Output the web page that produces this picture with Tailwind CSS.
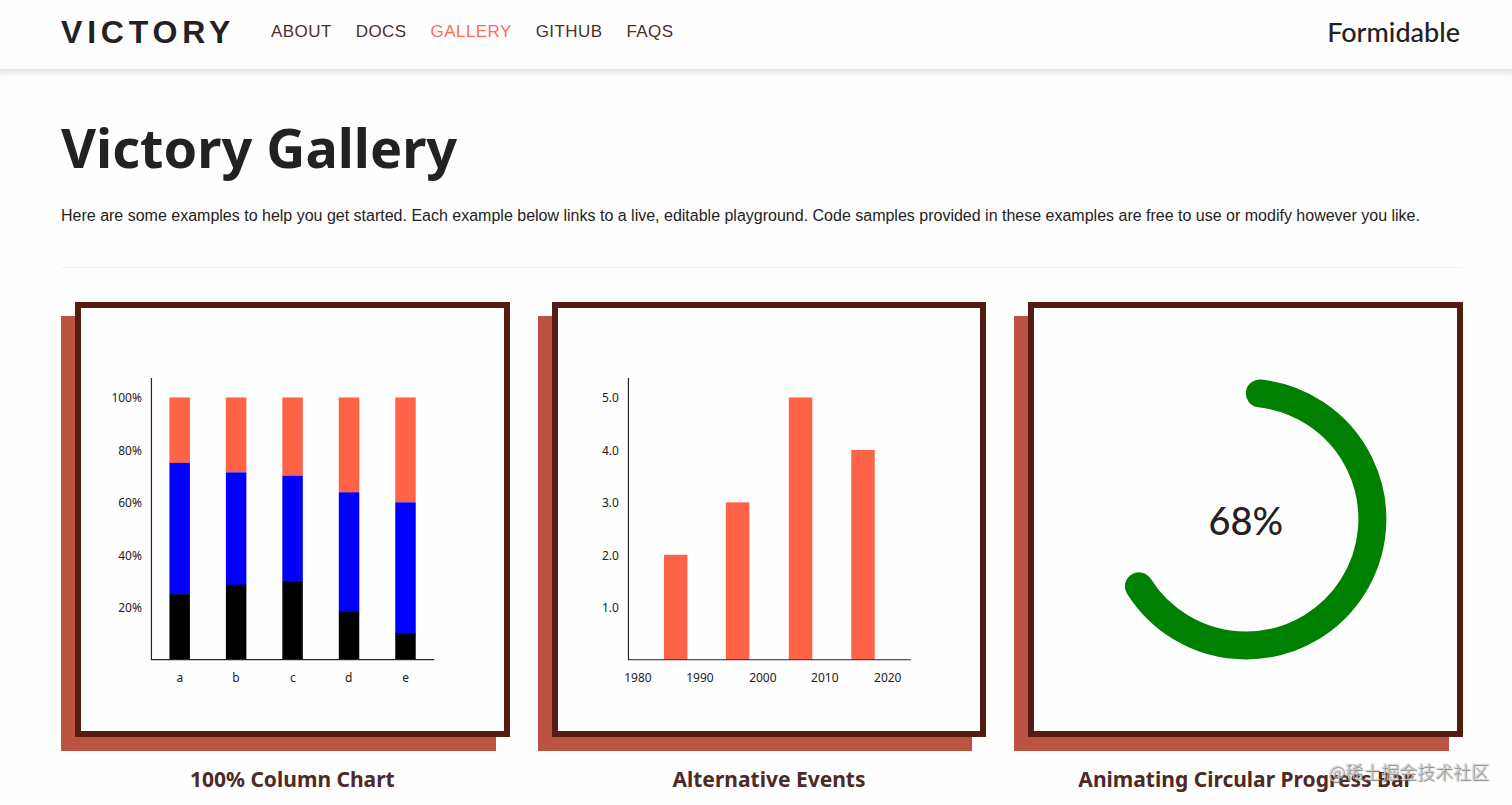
<!DOCTYPE html>
<html lang="en">
<head>
    <meta charset="UTF-8">
    <meta name="viewport" content="width=device-width, initial-scale=1.0">
    <title>Victory Gallery</title>
    <script src="https://cdn.jsdelivr.net/npm/@tailwindcss/browser@4"></script>
</head>
<body class="bg-[#fefefe] text-[#242121] font-['Liberation_Sans',Arial,sans-serif]">
    <div class="relative min-h-screen overflow-hidden">
        <header class="flex items-center justify-between h-[69px] pl-[61px] pr-[52px] pb-[6px] shadow-[0_2px_6px_2px_rgba(0,0,0,0.11)]">
            <div class="flex items-center gap-9">
                <a href="#" class="text-[32px] leading-10 font-bold tracking-[0.15em]">VICTORY</a>
                <nav class="flex gap-6 text-[17px] leading-6 tracking-wide text-[#4c2e2b]">
                    <a href="#">ABOUT</a>
                    <a href="#">DOCS</a>
                    <a href="#" class="text-[#ff6d55]">GALLERY</a>
                    <a href="#">GITHUB</a>
                    <a href="#">FAQS</a>
                </nav>
            </div>
            <a href="#" class="text-[27px] leading-8 font-medium font-[Lato,sans-serif]">Formidable</a>
        </header>

        <main class="pl-[61px] pr-[49px] pt-[38px]">
            <h1 class="text-[54px] leading-20 font-bold font-['Noto_Sans',sans-serif]">Victory Gallery</h1>
            <p class="mt-[13px] text-[16px] leading-8">Here are some examples to help you get started. Each example below links to a live, editable playground. Code samples provided in these examples are free to use or modify however you like.</p>
            <hr class="mt-[35px] border-[#f3f3f3]">

            <div class="mt-[34px] grid grid-cols-3 gap-7 text-[#4c2a26]">
                <!-- 100% column chart -->
                <a href="#" class="block">
                    <div class="pl-[14px] pb-[14px] bg-[linear-gradient(#bc5341,#bc5341)] bg-no-repeat bg-[position:0_14px] bg-[size:calc(100%-14px)_100%]">
                        <div class="aspect-square bg-[#fefefe] border-6 border-[#541c15]">
                            <svg viewBox="0 0 423 423" class="w-full h-full font-['Noto_Sans',sans-serif] text-[12px]" fill="#242121">
                                <g fill="tomato">
                                    <rect x="88.5" y="89.5" width="20.5" height="66"/>
                                    <rect x="145" y="89.5" width="20.5" height="75"/>
                                    <rect x="201.5" y="89.5" width="20.5" height="79"/>
                                    <rect x="258" y="89.5" width="20.5" height="95.5"/>
                                    <rect x="314.5" y="89.5" width="20.5" height="105"/>
                                </g>
                                <g fill="blue">
                                    <rect x="88.5" y="155" width="20.5" height="132"/>
                                    <rect x="145" y="164.5" width="20.5" height="113"/>
                                    <rect x="201.5" y="168" width="20.5" height="106"/>
                                    <rect x="258" y="184.5" width="20.5" height="120"/>
                                    <rect x="314.5" y="194.5" width="20.5" height="132"/>
                                </g>
                                <g fill="black">
                                    <rect x="88.5" y="286.5" width="20.5" height="65.5"/>
                                    <rect x="145" y="277" width="20.5" height="75"/>
                                    <rect x="201.5" y="273.5" width="20.5" height="78.5"/>
                                    <rect x="258" y="304" width="20.5" height="48"/>
                                    <rect x="314.5" y="325.5" width="20.5" height="26.5"/>
                                </g>
                                <path d="M70.5 70V352H353.5" fill="none" stroke="#252525" stroke-width="1.2"/>
                                <g text-anchor="end">
                                    <text x="61" y="94">100%</text>
                                    <text x="61" y="147">80%</text>
                                    <text x="61" y="199">60%</text>
                                    <text x="61" y="252">40%</text>
                                    <text x="61" y="304">20%</text>
                                </g>
                                <g text-anchor="middle">
                                    <text x="99" y="374">a</text>
                                    <text x="155" y="374">b</text>
                                    <text x="212" y="374">c</text>
                                    <text x="268" y="374">d</text>
                                    <text x="325" y="374">e</text>
                                </g>
                            </svg>
                        </div>
                    </div>
                    <h2 class="mt-3 pl-[14px] text-center text-[21px] leading-8 font-bold font-['Noto_Sans',sans-serif]">100% Column Chart</h2>
                </a>

                <!-- Alternative events -->
                <a href="#" class="block">
                    <div class="pl-[14px] pb-[14px] bg-[linear-gradient(#bc5341,#bc5341)] bg-no-repeat bg-[position:0_14px] bg-[size:calc(100%-14px)_100%]">
                        <div class="aspect-square bg-[#fefefe] border-6 border-[#541c15]">
                            <svg viewBox="0 0 423 423" class="w-full h-full font-['Noto_Sans',sans-serif] text-[12px]" fill="#242121">
                                <g fill="tomato">
                                    <rect x="106" y="247" width="23.5" height="105"/>
                                    <rect x="168" y="194.5" width="23.5" height="157.5"/>
                                    <rect x="231" y="89.5" width="23.5" height="262.5"/>
                                    <rect x="293.5" y="142" width="23.5" height="210"/>
                                </g>
                                <path d="M70.5 70V352H353" fill="none" stroke="#252525" stroke-width="1.2"/>
                                <g text-anchor="end">
                                    <text x="61" y="94">5.0</text>
                                    <text x="61" y="147">4.0</text>
                                    <text x="61" y="199">3.0</text>
                                    <text x="61" y="252">2.0</text>
                                    <text x="61" y="304">1.0</text>
                                </g>
                                <g text-anchor="middle">
                                    <text x="80" y="374">1980</text>
                                    <text x="142" y="374">1990</text>
                                    <text x="205" y="374">2000</text>
                                    <text x="267" y="374">2010</text>
                                    <text x="330" y="374">2020</text>
                                </g>
                            </svg>
                        </div>
                    </div>
                    <h2 class="mt-3 pl-[14px] text-center text-[21px] leading-8 font-bold font-['Noto_Sans',sans-serif]">Alternative Events</h2>
                </a>

                <!-- Circular progress -->
                <a href="#" class="block">
                    <div class="pl-[14px] pb-[14px] bg-[linear-gradient(#bc5341,#bc5341)] bg-no-repeat bg-[position:0_14px] bg-[size:calc(100%-14px)_100%]">
                        <div class="aspect-square bg-[#fefefe] border-6 border-[#541c15]">
                            <svg viewBox="0 0 423 423" class="w-full h-full font-[Lato,sans-serif] text-[38px] font-medium" fill="#242121">
                                <path d="M226 85.5A126.5 126.5 0 1 1 105 278.5" fill="none" stroke="green" stroke-width="28" stroke-linecap="round"/>
                                <text x="212" y="227" text-anchor="middle">68%</text>
                            </svg>
                        </div>
                    </div>
                    <h2 class="mt-3 pl-[14px] text-center text-[21px] leading-8 font-bold font-['Noto_Sans',sans-serif]">Animating Circular Progress Bar</h2>
                </a>
            </div>
        </main>

        <span class="absolute right-[23px] top-[759px] text-[18px] leading-6 font-light text-white/60 font-['Noto_Sans_CJK_SC',sans-serif] [text-shadow:1px_1px_1px_#666,0_0_1px_#888]">@稀土掘金技术社区</span>
    </div>
</body>
</html>
